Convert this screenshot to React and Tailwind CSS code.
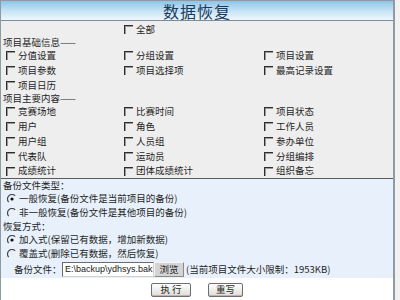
import React from "react";

const Check = () => (
  <span className="inline-block w-[9px] h-[9px] shrink-0 border-t border-l border-[#2e2e2e] shadow-[inset_1px_1px_0_#9a9a9a]" />
);

const Radio = ({ checked }) => (
  <svg width="10" height="10" viewBox="0 0 10 10" className="shrink-0">
    <path d="M8.2 1.8 A4.3 4.3 0 0 0 1.8 8.2" fill="none" stroke="#444" strokeWidth="1.2" />
    <path d="M1.8 8.2 A4.3 4.3 0 0 0 8.2 1.8" fill="none" stroke="#f4f4f4" strokeWidth="1" />
    {checked && <circle cx="5" cy="5" r="1.6" fill="#111" />}
  </svg>
);

const Item = ({ t }) => (
  <div className="flex items-center gap-[3px]">
    <Check />
    <span className="leading-none">{t}</span>
  </div>
);

const Row = ({ a, b, c, h = "h-[15px]" }) => (
  <div className={`grid grid-cols-[118px_140px_1fr] items-center pl-[5px] ${h}`}>
    <div>{a && <Item t={a} />}</div>
    <div>{b && <Item t={b} />}</div>
    <div>{c && <Item t={c} />}</div>
  </div>
);

const RRow = ({ checked, t }) => (
  <div className="flex items-center h-[14px] pl-[6px] gap-[2px]">
    <Radio checked={checked} />
    <span className="leading-none">{t}</span>
  </div>
);

export default function App() {
  return (
    <div className="w-[400px] h-[300px] bg-[#f1f1f1] overflow-hidden text-[9.5px] text-[#1e1e1e] [font-family:'Noto_Sans_CJK_SC','Noto_Sans',sans-serif]">
      <div className="w-[395px] h-[300px] border-l border-r-2 border-t border-[#8e9aa4] flex flex-col">
        <div className="h-[20px] border-b border-[#7d8c98] bg-gradient-to-b from-[#8fc4e6] via-[#c4e2f4] to-[#eef7fc] flex items-center justify-center">
          <span className="text-[16px] leading-[18px] pt-[1px] text-[#1a3a5c] tracking-[1px]">数据恢复</span>
        </div>
        <div className="bg-[#eeeeee] border-b border-[#5a5a5a]">
          <Row b="全部" h="h-[15px] mt-[1px]" />
          <div className="h-[11px] flex items-center pl-[2px] leading-none">项目基础信息——</div>
          <Row a="分值设置" b="分组设置" c="项目设置" />
          <Row a="项目参数" b="项目选择项" c="最高记录设置" />
          <Row a="项目日历" />
          <div className="h-[11px] flex items-center pl-[2px] leading-none">项目主要内容——</div>
          <Row a="竞赛场地" b="比赛时间" c="项目状态" />
          <Row a="用户" b="角色" c="工作人员" />
          <Row a="用户组" b="人员组" c="参办单位" />
          <Row a="代表队" b="运动员" c="分组编排" />
          <Row a="成绩统计" b="团体成绩统计" c="组织备忘" h="h-[14px]" />
        </div>
        <div className="bg-[#e8f1fb]">
          <div className="h-[13px] flex items-center pl-[2px] leading-none">备份文件类型：</div>
          <RRow checked t="一般恢复(备份文件是当前项目的备份)" />
          <RRow t="非一般恢复(备份文件是其他项目的备份)" />
          <div className="h-[13px] flex items-center pl-[2px] leading-none">恢复方式：</div>
          <RRow checked t="加入式(保留已有数据，增加新数据)" />
          <RRow t="覆盖式(删除已有数据，然后恢复)" />
          <div className="h-[17px] flex items-center pl-[13px]">
            <span className="leading-none w-[48px]">备份文件：</span>
            <div className="w-[92px] h-[15px] bg-white border border-[#6b6b6b] border-r-[#d0d0d0] border-b-[#d0d0d0] flex items-center pl-[2px] overflow-hidden">
              <span className="text-[9px] leading-none whitespace-nowrap [font-family:'Liberation_Sans',sans-serif] text-[#222]">E:\backup\ydhsys.bak</span>
            </div>
            <div className="w-[30px] h-[15px] bg-[#d4d4d4] border border-[#8a8a8a] border-t-[#f4f4f4] border-l-[#f4f4f4] flex items-center justify-center leading-none">浏览</div>
            <span className="leading-none ml-[2px] whitespace-nowrap">(当前项目文件大小限制：1953KB)</span>
          </div>
        </div>
        <div className="flex-1 bg-white flex justify-center gap-[17px] pt-[5px]">
          <div className="w-[40px] h-[14px] rounded-[2px] border border-[#6e6e6e] bg-gradient-to-b from-white to-[#dcdcdc] shadow-[inset_0_-1px_0_#e8b24a] flex items-center justify-center leading-none">执 行</div>
          <div className="w-[35px] h-[14px] rounded-[2px] border border-[#6e6e6e] bg-gradient-to-b from-white to-[#dcdcdc] shadow-[inset_0_-1px_0_#e8b24a] flex items-center justify-center leading-none">重写</div>
        </div>
      </div>
    </div>
  );
}
